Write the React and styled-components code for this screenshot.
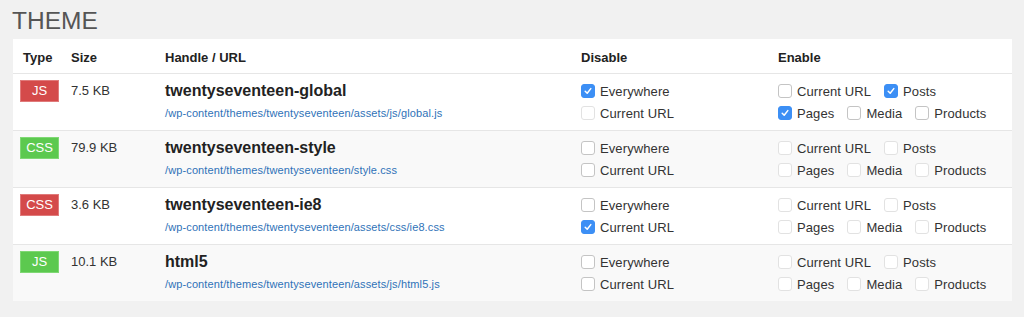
import React from "react";
import styled, { createGlobalStyle } from "styled-components";

const Global = createGlobalStyle`
  html, body {
    margin: 0;
    background: #f1f1f1;
    font-family: "Liberation Sans", Arial, sans-serif;
    color: #333;
  }
`;

const Page = styled.div`
  padding: 0 12px 16px 13px;
`;

const Heading = styled.h2`
  margin: 0 0 5px -1px;
  padding-top: 7px;
  font-size: 24.5px;
  line-height: 27px;
  font-weight: 400;
  color: #555;
`;

const Panel = styled.div`
  background: #fff;
  width: 999px;
`;

const Row = styled.div`
  display: grid;
  grid-template-columns: 48px 94px 416px 197px 1fr;
  padding: ${(p) => (p.$head ? "0" : "6px")} 0 ${(p) => (p.$head ? "0" : "6px")} 10px;
  height: ${(p) => (p.$head ? "34px" : "44px")};
  align-items: ${(p) => (p.$head ? "center" : "start")};
  background: ${(p) => (p.$alt ? "#f9f9f9" : "#fff")};
  border-bottom: ${(p) => (p.$last ? "none" : "1px solid #e6e6e6")};
  font-size: 13px;
`;

const HeadCell = styled.div`
  font-weight: 700;
  color: #222;
  padding-top: 2px;
`;

const Badge = styled.span`
  display: inline-block;
  box-sizing: border-box;
  width: 39px;
  height: 22px;
  margin-left: -3px;
  line-height: 20px;
  text-align: center;
  color: #fff;
  font-size: 13px;
  background: ${(p) => (p.$ok ? "#5cc94f" : "#d44a4a")};
  border: 1px solid ${(p) => (p.$ok ? "#7fd874" : "#e07a7a")};
`;

const Size = styled.div`
  line-height: 22px;
  color: #333;
`;

const Handle = styled.div`
  display: flex;
  flex-direction: column;
`;

const Name = styled.div`
  font-size: 16px;
  font-weight: 700;
  line-height: 22px;
  color: #222;
`;

const Url = styled.a`
  font-size: 11px;
  letter-spacing: 0.12px;
  line-height: 22px;
  color: #2f72b8;
  text-decoration: none;
`;

const Stack = styled.div`
  display: flex;
  flex-direction: column;
`;

const Line = styled.div`
  display: flex;
  height: 22px;
  align-items: center;
  gap: 13px;
`;

const Option = styled.label`
  display: flex;
  align-items: center;
  gap: 5px;
  color: #333;
  font-size: 13px;
  letter-spacing: 0.1px;
`;

const Box = styled.span`
  box-sizing: border-box;
  width: 14px;
  height: 14px;
  border-radius: 3px;
  display: inline-flex;
  align-items: center;
  justify-content: center;
  background: ${(p) => (p.$on ? "#3c8ff5" : "#fff")};
  border: 1px solid ${(p) => (p.$on ? "#3c8ff5" : p.$muted ? "#e2e2e2" : "#c4c4c4")};
`;

function Check({ label, on, muted }) {
  return (
    <Option>
      <Box $on={on} $muted={muted}>
        {on && (
          <svg width="10" height="10" viewBox="0 0 10 10">
            <polyline points="2.2,5.3 4.2,7.3 7.8,2.6" fill="none" stroke="#fff" strokeWidth="1.5" strokeLinecap="round" strokeLinejoin="round" />
          </svg>
        )}
      </Box>
      {label}
    </Option>
  );
}

const rows = [
  {
    type: "JS", ok: false, size: "7.5 KB", name: "twentyseventeen-global",
    url: "/wp-content/themes/twentyseventeen/assets/js/global.js",
    every: true, cur: false, curMuted: true, enMuted: false,
    en: { cur: false, posts: true, pages: true, media: false, products: false },
  },
  {
    type: "CSS", ok: true, size: "79.9 KB", name: "twentyseventeen-style",
    url: "/wp-content/themes/twentyseventeen/style.css",
    every: false, cur: false, curMuted: false, enMuted: true, alt: true,
    en: {},
  },
  {
    type: "CSS", ok: false, size: "3.6 KB", name: "twentyseventeen-ie8",
    url: "/wp-content/themes/twentyseventeen/assets/css/ie8.css",
    every: false, cur: true, curMuted: false, enMuted: true,
    en: {},
  },
  {
    type: "JS", ok: true, size: "10.1 KB", name: "html5",
    url: "/wp-content/themes/twentyseventeen/assets/js/html5.js",
    every: false, cur: false, curMuted: false, enMuted: true, alt: true,
    en: {},
  },
];

export default function App() {
  return (
    <Page>
      <Global />
      <Heading>THEME</Heading>
      <Panel>
        <Row $head>
          <HeadCell>Type</HeadCell>
          <HeadCell>Size</HeadCell>
          <HeadCell>Handle / URL</HeadCell>
          <HeadCell>Disable</HeadCell>
          <HeadCell>Enable</HeadCell>
        </Row>
        {rows.map((r, i) => (
          <Row key={r.name} $alt={r.alt} $last={i === rows.length - 1}>
            <div>
              <Badge $ok={r.ok}>{r.type}</Badge>
            </div>
            <Size>{r.size}</Size>
            <Handle>
              <Name>{r.name}</Name>
              <Url href="#">{r.url}</Url>
            </Handle>
            <Stack>
              <Line>
                <Check label="Everywhere" on={r.every} />
              </Line>
              <Line>
                <Check label="Current URL" on={r.cur} muted={r.curMuted} />
              </Line>
            </Stack>
            <Stack>
              <Line>
                <Check label="Current URL" on={r.en.cur} muted={r.enMuted} />
                <Check label="Posts" on={r.en.posts} muted={r.enMuted} />
              </Line>
              <Line>
                <Check label="Pages" on={r.en.pages} muted={r.enMuted} />
                <Check label="Media" on={r.en.media} muted={r.enMuted} />
                <Check label="Products" on={r.en.products} muted={r.enMuted} />
              </Line>
            </Stack>
          </Row>
        ))}
      </Panel>
    </Page>
  );
}
